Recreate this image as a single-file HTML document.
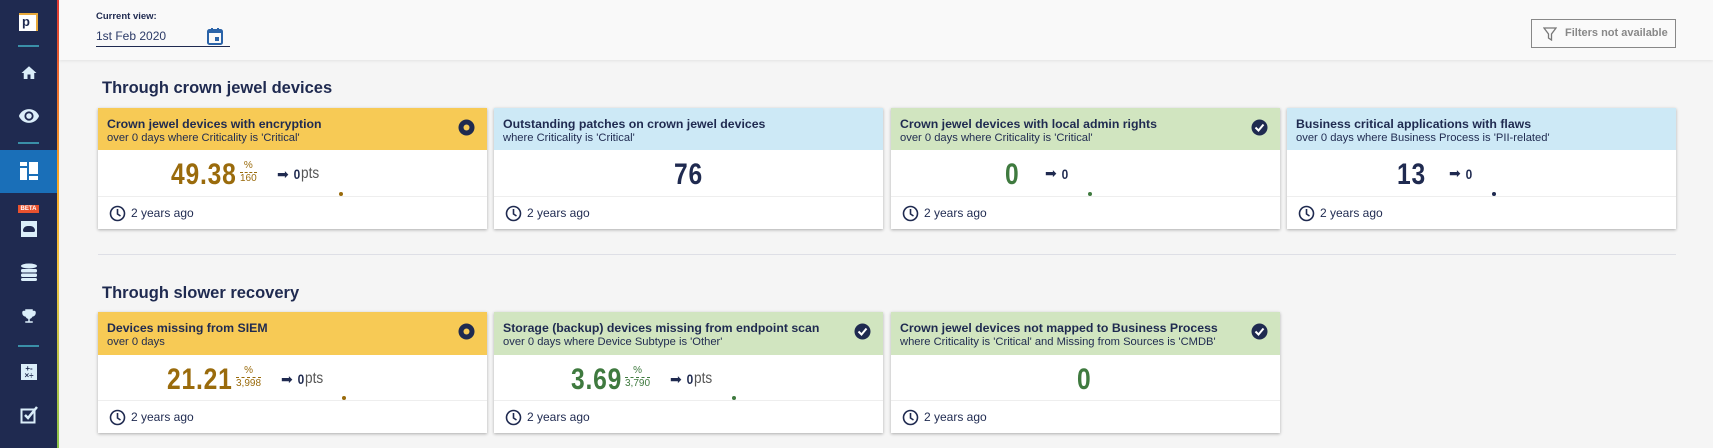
<!DOCTYPE html>
<html><head><meta charset="utf-8"><style>
*{margin:0;padding:0;box-sizing:border-box}
body{width:1713px;height:448px;overflow:hidden;background:#f5f5f5;font-family:"Liberation Sans",sans-serif;color:#1f2a50;position:relative}
.abs{position:absolute}
.side{left:0;top:0;width:58px;height:448px;background:#1f2a50}
.edge{left:57px;top:0;width:2px;height:448px;background:linear-gradient(#e53935,#f9a825 40%,#f4c542 60%,#8bc34a)}
.sep{left:18px;width:21px;height:2px;background:#3a8fa8}
.hdr{left:59px;top:0;width:1654px;height:60px;background:#f9f9f9;box-shadow:0 1px 3px rgba(0,0,0,.08)}
.sec{left:102px;font-size:16.5px;font-weight:bold;color:#1f2a50}
.card{position:absolute;width:389px;background:#fff;box-shadow:0 1px 3px rgba(0,0,0,.3)}
.ch{height:42px;padding:9px 9px 0;position:relative}
.ct{font-size:12.3px;font-weight:bold;line-height:15px;white-space:nowrap}
.cs{font-size:11.2px;line-height:13px;white-space:nowrap}
.cb{height:47px;position:relative;border-bottom:1px solid #eee}
.cf{height:32px;position:relative}
.cf span{position:absolute;left:33px;top:9px;font-size:12px}
.cf svg{position:absolute;left:11px;top:8px}
.num{position:absolute;font-weight:bold;font-size:30px;top:8px;transform:scaleX(.82);transform-origin:left;letter-spacing:1px}
.frac{position:absolute;top:10px;font-size:10px;line-height:12px;text-align:center}
.frac i{display:block;font-style:normal;border-bottom:1px dashed currentColor}
.pts{position:absolute;top:15px;font-size:14px;display:flex;align-items:center}
.pts b{margin-left:4px;transform:scaleX(.85)}
.pts em{font-style:normal;color:#555;font-size:16px;transform:scaleX(.85);transform-origin:left}
.dot{position:absolute;width:4px;height:4px;border-radius:50%;bottom:0}
.ic{position:absolute;right:12px;top:11px}
.y{background:#f7ca55}.b{background:#cde9f6}.g{background:#d1e5c0}
.gold{color:#9a6b0c}.grn{color:#3f7a3f}.nv{color:#1f2a50}
</style></head><body>
<div class="abs side"></div><div class="abs edge"></div>
<div class="abs" style="left:19px;top:13px;width:19px;height:18px;background:#fff;border-top:2px solid #e8a93a;border-right:2px solid #e8a93a"></div>
<div class="abs" style="left:22px;top:14px;font-size:13px;font-weight:bold;color:#1f2a50">p</div>
<div class="abs sep" style="top:45px"></div>
<svg class="abs" style="left:19px;top:64px" width="20" height="18" viewBox="0 0 24 24"><path d="M10 20v-6h4v6h5v-8h3L12 3 2 12h3v8z" fill="#dbeefa"/></svg>
<svg class="abs" style="left:18px;top:105px" width="22" height="22" viewBox="0 0 24 24"><path d="M12 4.5C7 4.5 2.7 7.6 1 12c1.7 4.4 6 7.5 11 7.5s9.3-3.1 11-7.5c-1.7-4.4-6-7.5-11-7.5zM12 17a5 5 0 110-10 5 5 0 010 10zm0-8a3 3 0 100 6 3 3 0 000-6z" fill="#dbeefa"/></svg>
<div class="abs sep" style="top:142px"></div>
<div class="abs" style="left:0;top:150px;width:57px;height:43px;background:#1a6fb8"></div>
<svg class="abs" style="left:20px;top:162px" width="18" height="18" viewBox="0 0 18 18"><rect x="0" y="0" width="7" height="4" fill="#fff"/><rect x="0" y="6" width="7" height="12" fill="#fff"/><rect x="9" y="0" width="9" height="12" fill="#fff"/><rect x="9" y="14" width="9" height="4" fill="#fff"/></svg>
<div class="abs" style="left:18px;top:205px;width:21px;height:8px;background:#e8522f;color:#fff;font-size:6px;font-weight:bold;text-align:center;line-height:8px">BETA</div>
<div class="abs" style="left:21px;top:221px;width:16px;height:16px;background:#dbeefa"></div>
<div class="abs" style="left:23px;top:226px;width:12px;height:6px;background:#1f2a50;border-radius:6px 6px 2px 2px"></div>
<svg class="abs" style="left:20px;top:263px" width="18" height="18" viewBox="0 0 18 18" fill="#dbeefa"><ellipse cx="9" cy="3" rx="8" ry="2.5"/><rect x="1" y="6" width="16" height="3.5" rx="1.5"/><rect x="1" y="10.5" width="16" height="3.5" rx="1.5"/><rect x="1" y="15" width="16" height="3" rx="1.5"/></svg>
<svg class="abs" style="left:20px;top:307px" width="18" height="18" viewBox="0 0 24 24"><path d="M19 5h-2V3H7v2H5c-1.1 0-2 .9-2 2v1c0 2.5 1.9 4.6 4.4 4.9.6 1.5 2 2.7 3.6 3V19H7v2h10v-2h-4v-3.1c1.6-.3 3-1.5 3.6-3 2.5-.3 4.4-2.4 4.4-4.9V7c0-1.1-.9-2-2-2z" fill="#dbeefa"/></svg>
<div class="abs sep" style="top:345px"></div>
<div class="abs" style="left:21px;top:364px;width:16px;height:16px;background:#dbeefa;color:#1f2a50;font-size:8px;font-weight:bold;line-height:7px;text-align:center;padding-top:1px">+-<br>×÷</div>
<svg class="abs" style="left:20px;top:405px" width="19" height="19" viewBox="0 0 19 19"><rect x="1.5" y="4.5" width="13" height="13" fill="none" stroke="#dbeefa" stroke-width="2"/><path d="M5 10l3 3 9-11" fill="none" stroke="#dbeefa" stroke-width="2.5"/></svg>

<div class="abs hdr"></div>
<div class="abs" style="left:96px;top:11px;font-size:9.5px;font-weight:bold">Current view:</div>
<div class="abs" style="left:96px;top:29px;font-size:12px;color:#2b3a67">1st Feb 2020</div>
<div class="abs" style="left:96px;top:46px;width:134px;height:1px;background:#1f2a50"></div>
<svg class="abs" style="left:207px;top:27px" width="16" height="18" viewBox="0 0 16 18"><rect x="1" y="3" width="14" height="14" rx="1.5" fill="none" stroke="#2a63a8" stroke-width="2"/><rect x="1" y="3" width="14" height="3" fill="#2a63a8"/><rect x="4" y="1" width="2" height="3" fill="#2a63a8"/><rect x="10" y="1" width="2" height="3" fill="#2a63a8"/><rect x="8" y="10" width="4" height="4" fill="#2a63a8"/></svg>
<div class="abs" style="left:1531px;top:19px;width:145px;height:29px;border:1px solid #888;background:#fafafa"></div>
<svg class="abs" style="left:1543px;top:27px" width="14" height="14" viewBox="0 0 14 14"><path d="M1 1h12L8.5 7v6L5.5 11V7z" fill="none" stroke="#777" stroke-width="1.3"/></svg>
<div class="abs" style="left:1565px;top:27px;font-size:11px;font-weight:bold;color:#888">Filters not available</div>

<div class="abs sec" style="top:79px">Through crown jewel devices</div>
<div class="abs" style="left:98px;top:254px;width:1578px;height:1px;background:#dedfe6"></div>
<div class="abs sec" style="top:284px">Through slower recovery</div>

<!-- row 1 -->
<div class="card" style="left:98px;top:108px">
 <div class="ch y"><div class="ct">Crown jewel devices with encryption</div><div class="cs">over 0 days where Criticality is 'Critical'</div>
 <svg class="ic" width="17" height="17"><circle cx="8.5" cy="8.5" r="8" fill="#1f2a50"/><circle cx="8.5" cy="8.5" r="3" fill="#f7ca55"/></svg></div>
 <div class="cb"><div class="num gold" style="left:73px">49.38</div><div class="frac gold" style="left:142px"><i>%</i>160</div>
 <div class="pts" style="left:179px">➡<b>0</b><em>pts</em></div><div class="dot" style="left:241px;background:#9a6b0c"></div></div>
 <div class="cf"><svg width="17" height="17"><circle cx="8.5" cy="8.5" r="7" fill="none" stroke="#1f2a50" stroke-width="1.6"/><path d="M8.5 4v5l3 2" fill="none" stroke="#1f2a50" stroke-width="1.6"/></svg><span>2 years ago</span></div>
</div>
<div class="card" style="left:494px;top:108px">
 <div class="ch b"><div class="ct">Outstanding patches on crown jewel devices</div><div class="cs">where Criticality is 'Critical'</div></div>
 <div class="cb"><div class="num nv" style="left:180px">76</div></div>
 <div class="cf"><svg width="17" height="17"><circle cx="8.5" cy="8.5" r="7" fill="none" stroke="#1f2a50" stroke-width="1.6"/><path d="M8.5 4v5l3 2" fill="none" stroke="#1f2a50" stroke-width="1.6"/></svg><span>2 years ago</span></div>
</div>
<div class="card" style="left:891px;top:108px">
 <div class="ch g"><div class="ct">Crown jewel devices with local admin rights</div><div class="cs">over 0 days where Criticality is 'Critical'</div>
 <svg class="ic" width="17" height="17"><circle cx="8.5" cy="8.5" r="8" fill="#1f2a50"/><path d="M4.5 8.5l3 3 5-6" fill="none" stroke="#fff" stroke-width="2"/></svg></div>
 <div class="cb"><div class="num grn" style="left:114px">0</div>
 <div class="pts" style="left:154px">➡<b>0</b></div><div class="dot" style="left:197px;background:#3f7a3f"></div></div>
 <div class="cf"><svg width="17" height="17"><circle cx="8.5" cy="8.5" r="7" fill="none" stroke="#1f2a50" stroke-width="1.6"/><path d="M8.5 4v5l3 2" fill="none" stroke="#1f2a50" stroke-width="1.6"/></svg><span>2 years ago</span></div>
</div>
<div class="card" style="left:1287px;top:108px">
 <div class="ch b"><div class="ct">Business critical applications with flaws</div><div class="cs">over 0 days where Business Process is 'PII-related'</div></div>
 <div class="cb"><div class="num nv" style="left:110px">13</div>
 <div class="pts" style="left:162px">➡<b>0</b></div><div class="dot" style="left:205px;background:#1f2a50"></div></div>
 <div class="cf"><svg width="17" height="17"><circle cx="8.5" cy="8.5" r="7" fill="none" stroke="#1f2a50" stroke-width="1.6"/><path d="M8.5 4v5l3 2" fill="none" stroke="#1f2a50" stroke-width="1.6"/></svg><span>2 years ago</span></div>
</div>

<!-- row 2 -->
<div class="card" style="left:98px;top:312px">
 <div class="ch y" style="height:43px"><div class="ct">Devices missing from SIEM</div><div class="cs">over 0 days</div>
 <svg class="ic" width="17" height="17"><circle cx="8.5" cy="8.5" r="8" fill="#1f2a50"/><circle cx="8.5" cy="8.5" r="3" fill="#f7ca55"/></svg></div>
 <div class="cb" style="height:46px"><div class="num gold" style="left:69px">21.21</div><div class="frac gold" style="left:138px"><i>%</i>3,998</div>
 <div class="pts" style="left:183px">➡<b>0</b><em>pts</em></div><div class="dot" style="left:244px;background:#9a6b0c"></div></div>
 <div class="cf"><svg width="17" height="17"><circle cx="8.5" cy="8.5" r="7" fill="none" stroke="#1f2a50" stroke-width="1.6"/><path d="M8.5 4v5l3 2" fill="none" stroke="#1f2a50" stroke-width="1.6"/></svg><span>2 years ago</span></div>
</div>
<div class="card" style="left:494px;top:312px">
 <div class="ch g" style="height:43px"><div class="ct">Storage (backup) devices missing from endpoint scan</div><div class="cs">over 0 days where Device Subtype is 'Other'</div>
 <svg class="ic" width="17" height="17"><circle cx="8.5" cy="8.5" r="8" fill="#1f2a50"/><path d="M4.5 8.5l3 3 5-6" fill="none" stroke="#fff" stroke-width="2"/></svg></div>
 <div class="cb" style="height:46px"><div class="num grn" style="left:77px">3.69</div><div class="frac grn" style="left:131px"><i>%</i>3,790</div>
 <div class="pts" style="left:176px">➡<b>0</b><em>pts</em></div><div class="dot" style="left:238px;background:#3f7a3f"></div></div>
 <div class="cf"><svg width="17" height="17"><circle cx="8.5" cy="8.5" r="7" fill="none" stroke="#1f2a50" stroke-width="1.6"/><path d="M8.5 4v5l3 2" fill="none" stroke="#1f2a50" stroke-width="1.6"/></svg><span>2 years ago</span></div>
</div>
<div class="card" style="left:891px;top:312px">
 <div class="ch g" style="height:43px"><div class="ct">Crown jewel devices not mapped to Business Process</div><div class="cs">where Criticality is 'Critical' and Missing from Sources is 'CMDB'</div>
 <svg class="ic" width="17" height="17"><circle cx="8.5" cy="8.5" r="8" fill="#1f2a50"/><path d="M4.5 8.5l3 3 5-6" fill="none" stroke="#fff" stroke-width="2"/></svg></div>
 <div class="cb" style="height:46px"><div class="num grn" style="left:186px">0</div></div>
 <div class="cf"><svg width="17" height="17"><circle cx="8.5" cy="8.5" r="7" fill="none" stroke="#1f2a50" stroke-width="1.6"/><path d="M8.5 4v5l3 2" fill="none" stroke="#1f2a50" stroke-width="1.6"/></svg><span>2 years ago</span></div>
</div>
</body></html>
